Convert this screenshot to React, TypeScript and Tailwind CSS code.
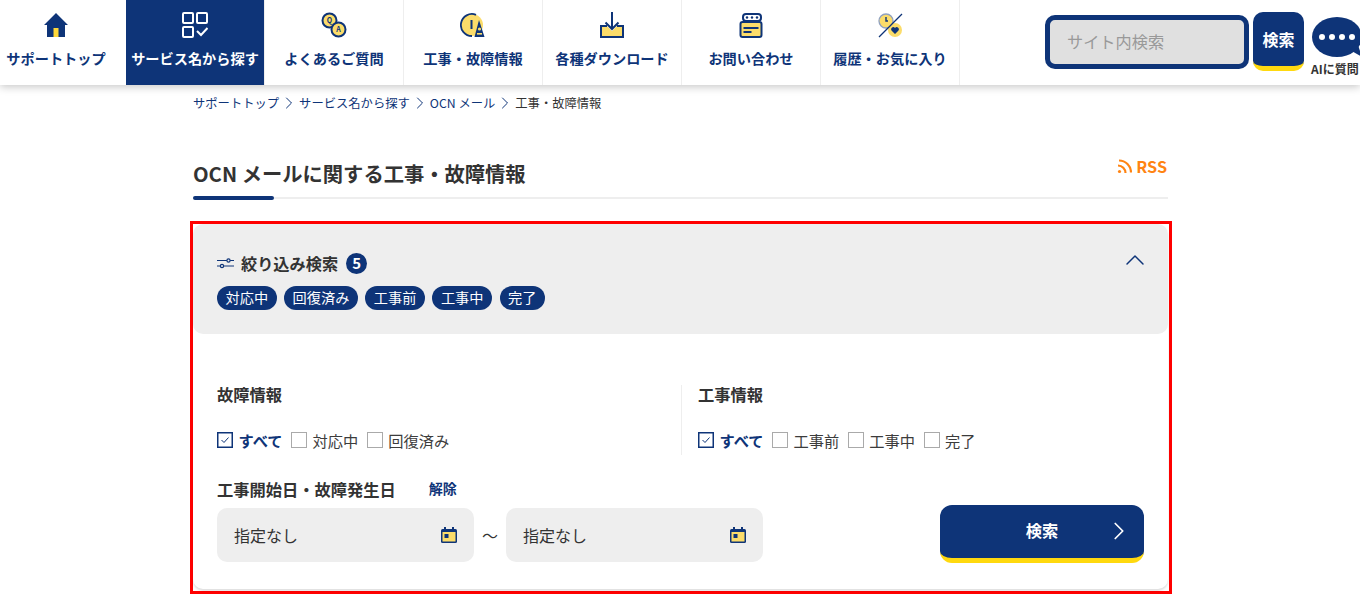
import { ChevronRight, ChevronUp } from "lucide-react";
import type { ReactNode } from "react";

const NAVY = "#0e3478";
const YEL = "#fbdc6a";

function HomeIcon() {
  return (
    <svg width="26" height="26" viewBox="0 0 26 26">
      <path d="M13 1 L25 13 H22 V25 H4 V13 H1 Z" fill={NAVY} />
      <rect x="10.5" y="16" width="5" height="9" fill="#ffd83a" />
    </svg>
  );
}
function ServiceIcon() {
  return (
    <svg width="26" height="26" viewBox="0 0 26 26" fill="none" stroke="#fff" strokeWidth="2">
      <rect x="1" y="1" width="10" height="10" rx="1" />
      <rect x="15" y="1" width="10" height="10" rx="1" />
      <rect x="1" y="15" width="10" height="10" rx="1" />
      <path d="M15 19 L19 23 L25.5 16" />
    </svg>
  );
}
function FaqIcon() {
  return (
    <svg width="26" height="26" viewBox="0 0 26 26">
      <circle cx="8.5" cy="8.5" r="7" fill={YEL} stroke={NAVY} strokeWidth="2" />
      <circle cx="17.5" cy="17.5" r="7" fill={YEL} stroke={NAVY} strokeWidth="2" />
      <text x="8.5" y="11" fontSize="7" fontWeight="700" textAnchor="middle" fill={NAVY}>Q</text>
      <text x="17.5" y="20" fontSize="7" fontWeight="700" textAnchor="middle" fill={NAVY}>A</text>
    </svg>
  );
}
function InfoIcon() {
  return (
    <svg width="26" height="26" viewBox="0 0 26 26">
      <circle cx="12" cy="13" r="11" fill={YEL} />
      <path d="M16 2.8 A11 11 0 1 0 12 24" fill="none" stroke={NAVY} strokeWidth="1.8" />
      <rect x="10.5" y="8" width="2" height="9" fill={NAVY} />
      <path d="M19 8 L24.5 25 H14.5 Z" fill={NAVY} />
      <circle cx="19.5" cy="17" r="1.6" fill={YEL} />
      <rect x="17" y="21" width="5" height="1.6" fill={YEL} />
    </svg>
  );
}
function DownloadIcon() {
  return (
    <svg width="26" height="26" viewBox="0 0 26 26" fill="none" stroke={NAVY} strokeWidth="2">
      <path d="M2 14 H8 L13 19 L18 14 H24 V25 H2 Z" fill={YEL} stroke="none" />
      <path d="M8 14 H2 V25 H24 V14 H18" />
      <path d="M13 0 V17 M6.5 10.5 L13 17 L19.5 10.5" />
    </svg>
  );
}
function ContactIcon() {
  return (
    <svg width="26" height="26" viewBox="0 0 26 26">
      <rect x="5" y="2" width="18" height="7" rx="3" fill="#fff" stroke={NAVY} strokeWidth="2" />
      <circle cx="9" cy="5.5" r="1.2" fill={NAVY} />
      <circle cx="14" cy="5.5" r="1.2" fill={NAVY} />
      <circle cx="19" cy="5.5" r="1.2" fill={NAVY} />
      <rect x="2.5" y="10" width="21" height="15" rx="2" fill={YEL} stroke={NAVY} strokeWidth="2" />
      <rect x="5.5" y="15" width="15" height="2" fill={NAVY} />
      <rect x="5.5" y="19" width="8" height="2" fill={NAVY} />
    </svg>
  );
}
function HistoryIcon() {
  return (
    <svg width="26" height="26" viewBox="0 0 26 26">
      <circle cx="9" cy="9" r="7" fill={YEL} stroke="#8fa0c0" strokeWidth="1.3" />
      <path d="M9 5 V9 H11" stroke={NAVY} strokeWidth="1.4" fill="none" />
      <circle cx="18" cy="18" r="7" fill={YEL} />
      <path d="M18 22 L14.5 18.5 A2 2 0 0 1 18 16 A2 2 0 0 1 21.5 18.5 Z" fill={NAVY} />
      <path d="M2 25 L25 2" stroke={NAVY} strokeWidth="1.3" />
    </svg>
  );
}
function CalendarIcon() {
  return (
    <svg width="16" height="16" viewBox="0 0 16 16" className="shrink-0">
      <rect x="0" y="2" width="16" height="14" rx="1.5" fill={NAVY} />
      <rect x="3" y="0" width="2" height="3" fill={NAVY} />
      <rect x="11" y="0" width="2" height="3" fill={NAVY} />
      <rect x="1.5" y="5" width="13" height="9.5" fill={YEL} />
      <rect x="3.5" y="7" width="4" height="4" fill={NAVY} />
    </svg>
  );
}
function FilterIcon() {
  return (
    <svg width="17" height="12" viewBox="0 0 17 12" fill="none" stroke={NAVY} strokeWidth="1.2">
      <path d="M0 3.5 H17 M0 9 H17" />
      <circle cx="11.5" cy="3.5" r="1.6" fill="#eee" />
      <circle cx="5" cy="9" r="1.6" fill="#eee" />
    </svg>
  );
}
function RssIcon() {
  return (
    <svg width="15" height="15" viewBox="0 0 15 15" fill="none" stroke="#ff8412" strokeWidth="2.2">
      <circle cx="2.5" cy="12.5" r="1.6" fill="#ff8412" stroke="none" />
      <path d="M1 6.5 A7.5 7.5 0 0 1 8.5 14" />
      <path d="M2 1.5 A12 12 0 0 1 14 13.5" />
    </svg>
  );
}

function NavItem({ icon, label, active, w }: { icon: ReactNode; label: string; active?: boolean; w: string }) {
  return (
    <a
      className={`${w} shrink-0 h-[85px] flex flex-col items-center border-r border-[#eeeeee] pt-[12px] text-[14.2px] font-bold whitespace-nowrap ${
        active ? "bg-[#0e3478] text-white" : "text-[#0e3478]"
      }`}
    >
      <span className="h-[26px]">{icon}</span>
      <span className="mt-[9px] leading-[22px]">{label}</span>
    </a>
  );
}

function Check({ label, on }: { label: string; on?: boolean }) {
  return (
    <label className="flex items-center gap-[5.5px]">
      {on ? (
        <svg width="16" height="16" viewBox="0 0 16 16" fill="none" stroke={NAVY}>
          <rect x="0.75" y="0.75" width="14.5" height="14.5" strokeWidth="1.5" />
          <path d="M4.5 8 L7 10.5 L11.5 5.5" strokeWidth="1" />
        </svg>
      ) : (
        <span className="block w-[16px] h-[16px] border-[1.5px] border-[#aaaaaa]" />
      )}
      <span className={on ? "text-[15.25px] font-bold text-[#0e3478]" : "text-[15.25px] text-[#3c3c3c]"}>{label}</span>
    </label>
  );
}

function DateBox() {
  return (
    <div className="w-[257px] h-[54px] rounded-[10px] bg-[#eeeeee] flex items-center justify-between pl-[17px] pr-[17px] text-[16px] text-[#333333]">
      指定なし
      <CalendarIcon />
    </div>
  );
}

function Crumb() {
  return (
    <span className="w-[20px] flex justify-center">
      <ChevronRight size={20} strokeWidth={1.2} className="shrink-0" />
    </span>
  );
}

export default function App() {
  const chips = ["対応中", "回復済み", "工事前", "工事中", "完了"];
  return (
    <div
      className="w-[1360px] h-[594px] overflow-hidden bg-white text-[#333333]"
      style={{ fontFamily: '"Noto Sans CJK JP", "Noto Sans", sans-serif' }}
    >
      <header className="h-[85px] flex bg-white shadow-[0_2px_8px_rgba(0,0,0,0.22)] relative">
        <NavItem w="w-[126px] pr-[14px] border-r-0" icon={<HomeIcon />} label="サポートトップ" />
        <NavItem w="w-[139px]" active icon={<ServiceIcon />} label="サービス名から探す" />
        <NavItem w="w-[139px]" icon={<FaqIcon />} label="よくあるご質問" />
        <NavItem w="w-[139px]" icon={<InfoIcon />} label="工事・故障情報" />
        <NavItem w="w-[139px]" icon={<DownloadIcon />} label="各種ダウンロード" />
        <NavItem w="w-[139px]" icon={<ContactIcon />} label="お問い合わせ" />
        <NavItem w="w-[139px]" icon={<HistoryIcon />} label="履歴・お気に入り" />
        <div className="ml-[85px] mt-[15px] w-[204px] shrink-0 h-[54px] rounded-[10px] border-[5px] border-[#0e3478] bg-[#e0e0e0] flex items-center pl-[17px] pb-[2px] text-[16.2px] text-[#999999]">
          サイト内検索
        </div>
        <div className="ml-[4px] mt-[12px] w-[51px] shrink-0 h-[59px] rounded-[10px] bg-[#0e3478] border-b-[5px] border-[#ffd90f] flex items-center justify-center text-[16px] font-bold text-white">
          検索
        </div>
        <div className="ml-[6px] mt-[17px] w-[60px] shrink-0 flex flex-col items-start">
          <svg width="56" height="46" viewBox="0 0 56 46" className="ml-[2px] shrink-0">
            <ellipse cx="25" cy="20" rx="25" ry="20" fill={NAVY} />
            <path d="M38 33 L50 40 L45 25 Z" fill={NAVY} />
            <circle cx="10" cy="20" r="3" fill="#fff" />
            <circle cx="20" cy="20" r="3" fill="#fff" />
            <circle cx="30" cy="20" r="3" fill="#fff" />
            <circle cx="40" cy="20" r="3" fill="#fff" />
          </svg>
          <span className="-mt-[2px] ml-[1px] text-[12px] font-bold leading-[16px] whitespace-nowrap text-[#333333]">AIに質問</span>
        </div>
      </header>

      <main className="w-[982px] ml-[190px]">
        <div className="px-[3px]">
          <nav className="h-[36px] flex items-center text-[12.3px] text-[#0e3478] whitespace-nowrap">
            <span>サポートトップ</span>
            <Crumb />
            <span>サービス名から探す</span>
            <Crumb />
            <span>OCN メール</span>
            <Crumb />
            <span className="text-[#333333]">工事・故障情報</span>
          </nav>
          <div className="w-[975px] h-[78px] border-b-2 border-[#eeeeee] relative flex items-start justify-between pt-[36px]">
            <h1 className="text-[20.3px] font-bold leading-[32px] text-[#333333]">OCN メールに関する工事・故障情報</h1>
            <span className="flex items-center gap-[4px] mr-[1px] text-[16.2px] font-bold text-[#ff8412] leading-[20px] -mt-[1px]">
              <RssIcon />
              RSS
            </span>
            <span className="absolute left-0 -bottom-[3px] w-[81px] h-[4px] rounded-full bg-[#0e3478]" />
          </div>
        </div>

        <section className="mt-[22px] h-[373px] border-[3px] border-[#ff0000]">
          <div className="h-[365px] w-[975px] rounded-[10px] bg-white shadow-[0_2px_2px_rgba(0,0,0,0.12)]">
            <div className="h-[110px] rounded-[10px] bg-[#eeeeee] pl-[24px] pr-[24px] pt-[27px] relative">
              <div className="flex items-center h-[24px]">
                <FilterIcon />
                <span className="ml-[7px] text-[16.2px] font-bold">絞り込み検索</span>
                <span className="ml-[8px] w-[21px] h-[21px] rounded-full bg-[#0e3478] text-white text-[15px] font-bold flex items-center justify-center">5</span>
              </div>
              <ChevronUp size={32} strokeWidth={1.1} className="absolute right-[17px] top-[20px] text-[#0e3478]" />
              <div className="mt-[11px] flex gap-[7.5px]">
                {chips.map((c) => (
                  <span key={c} className="h-[24px] rounded-full bg-[#0e3478] px-[8.5px] flex items-center text-[14.2px] text-white">
                    {c}
                  </span>
                ))}
              </div>
            </div>

            <div className="pl-[24px] pt-[51px] flex">
              <div className="w-[464px] h-[70px]">
                <h2 className="text-[16.25px] font-bold leading-[18px]">故障情報</h2>
                <div className="mt-[26px] flex gap-[8.5px]">
                  <Check on label="すべて" />
                  <Check label="対応中" />
                  <Check label="回復済み" />
                </div>
              </div>
              <div className="w-[1px] h-[70px] bg-[#eeeeee] mr-[16px]" />
              <div className="h-[70px]">
                <h2 className="text-[16.25px] font-bold leading-[18px]">工事情報</h2>
                <div className="mt-[26px] flex gap-[8.5px]">
                  <Check on label="すべて" />
                  <Check label="工事前" />
                  <Check label="工事中" />
                  <Check label="完了" />
                </div>
              </div>
            </div>

            <div className="pl-[24px] pr-[24px] mt-[23px] flex items-end justify-between">
              <div>
                <div className="flex items-center h-[22px] mb-[8px]">
                  <span className="text-[16.25px] font-bold">工事開始日・故障発生日</span>
                  <a className="ml-[33px] text-[14px] font-bold text-[#0e3478] -mt-[2px]">解除</a>
                </div>
                <div className="flex items-center">
                  <DateBox />
                  <span className="w-[32px] text-center text-[16px]">～</span>
                  <DateBox />
                </div>
              </div>
              <div className="w-[204px] h-[58px] mb-[-1px] pb-[2px] rounded-[12px] bg-[#0e3478] border-b-[5px] border-[#ffd90f] flex items-center justify-center relative text-[16.25px] font-bold text-white">
                検索
                <ChevronRight size={30} strokeWidth={1.4} className="absolute right-[10px] top-[11px]" />
              </div>
            </div>
          </div>
        </section>
      </main>
    </div>
  );
}
